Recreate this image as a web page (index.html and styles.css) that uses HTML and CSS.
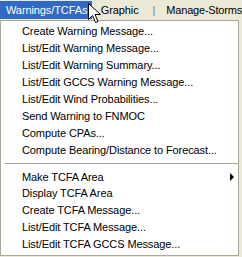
FILE: index.html
```html
<!DOCTYPE html>
<html>
  <head>
    <title>Warnings/TCFAs</title>
    <meta charset="UTF-8" />
    <link rel="stylesheet" href="styles.css">
  </head>
  <body>
    <div class="menubar">
      <span class="top active">Warnings/TCFAs</span>
      <span class="top">Graphic</span>
      <span class="sep">|</span>
      <span class="top last">Manage-Storms</span>
    </div>
    <ul class="menu">
      <li>Create Warning Message...</li>
      <li>List/Edit Warning Message...</li>
      <li>List/Edit Warning Summary...</li>
      <li>List/Edit GCCS Warning Message...</li>
      <li>List/Edit Wind Probabilities...</li>
      <li>Send Warning to FNMOC</li>
      <li>Compute CPAs...</li>
      <li>Compute Bearing/Distance to Forecast...</li>
      <li class="divider"></li>
      <li class="sub">Make TCFA Area<span class="arrow"></span></li>
      <li>Display TCFA Area</li>
      <li>Create TCFA Message...</li>
      <li>List/Edit TCFA Message...</li>
      <li>List/Edit TCFA GCCS Message...</li>
    </ul>
    <svg class="cursor" width="13" height="21" viewBox="0 0 13 21">
      <path d="M0.5 0.5 L0.5 16.5 L4.5 12.5 L7.5 19.5 L10 18.5 L7 11.5 L12.5 11.5 Z" fill="#fff" stroke="#000" stroke-width="1" />
    </svg>
  </body>
</html>
```

FILE: styles.css
```css
body {
  margin: 0;
  background: #ece9d8;
  font-family: "Liberation Sans", Arial, sans-serif;
  font-size: 11px;
  letter-spacing: -0.1px;
  color: #000;
  width: 242px;
  height: 257px;
  overflow: hidden;
  position: relative;
}
.menubar {
  height: 20px;
  display: flex;
  align-items: stretch;
  white-space: nowrap;
}
.menubar span {
  display: flex;
  align-items: center;
}
.top {
  padding: 0 0 0 9px;
}
.top.active {
  background: #316ac5;
  color: #fff;
  width: 86px;
  padding: 0 0 0 6px;
  margin: 1px 0;
}
.top.last {
  padding: 0;
  letter-spacing: -0.2px;
}
.sep {
  color: #808080;
  padding: 0 11px 0 14px;
}
.menu {
  list-style: none;
  margin: 0;
  padding: 2px 0;
  width: 237px;
  background: #fff;
  border: 1px solid #aca899;
}
.menu li {
  height: 17px;
  line-height: 17px;
  padding-left: 21px;
  position: relative;
  white-space: nowrap;
}
.menu li.divider {
  height: 9px;
  padding: 0;
  margin: 0 0 0 4px;
  display: flex;
  align-items: center;
}
.menu li.divider::before {
  content: "";
  flex: 1;
  height: 1px;
  background: #aca899;
}
.menu li.sub {
  margin-top: 1px;
  margin-bottom: -1px;
}
.arrow {
  position: absolute;
  right: 4px;
  top: 4px;
  border-left: 4px solid #000;
  border-top: 4px solid transparent;
  border-bottom: 4px solid transparent;
}
.cursor {
  position: absolute;
  left: 88px;
  top: 3px;
}
```
